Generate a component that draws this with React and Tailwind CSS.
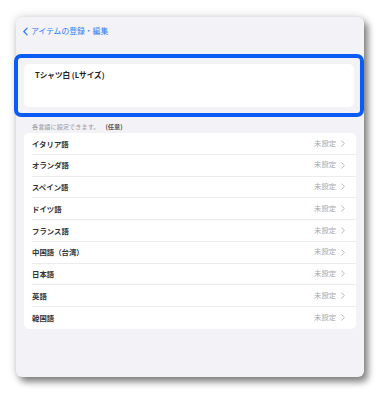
import React from 'react';

const languages = ['イタリア語', 'オランダ語', 'スペイン語', 'ドイツ語', 'フランス語', '中国語（台湾）', '日本語', '英語', '韓国語'];

const Chevron = ({ className }) => (
  <svg viewBox="0 0 6 10" className={className} fill="none" stroke="currentColor" strokeWidth="1.2" strokeLinecap="round" strokeLinejoin="round">
    <path d="M1 1l4 4-4 4" />
  </svg>
);

const App = () => {
  return (
    <div className="w-[389px] h-[403px] bg-white pt-[17px] pl-[16px] leading-none" style={{ fontFamily: '"Noto Sans CJK JP", "Noto Sans", sans-serif' }}>
      <div className="relative w-[348px] h-[360px] bg-[#f2f2f7] rounded-[6px] shadow-[0_0_10px_rgba(0,0,0,0.18),4px_5px_7px_rgba(0,0,0,0.45)]">
        {/* header */}
        <div className="flex items-center gap-[3px] pl-[7px] h-[28px] text-[#2f7df6]">
          <svg viewBox="0 0 6 10" className="w-[5px] h-[9px]" fill="none" stroke="currentColor" strokeWidth="1.5" strokeLinecap="round" strokeLinejoin="round">
            <path d="M5 1L1 5l4 4" />
          </svg>
          <span className="text-[7.8px] leading-none">アイテムの登録・編集</span>
        </div>

        {/* highlighted name field */}
        <div className="ml-[-2px] mt-[9px] w-[350px] h-[63px] border-[4px] border-[#0a5cf5] rounded-[7px] px-[6px] py-[6px]">
          <div className="h-full bg-white rounded-[5px] pl-[11px] pt-[7px]">
            <div className="text-[7.6px] leading-none font-bold text-[#222]">Tシャツ白 (Lサイズ)</div>
          </div>
        </div>

        {/* caption */}
        <div className="pl-[16px] mt-[4px] h-[12px] flex items-center text-[6.2px] leading-none">
          <span className="text-[#9a9aa0]">各言語に設定できます。</span>
          <span className="ml-[6px] text-[#555] font-bold">(任意)</span>
        </div>

        {/* language list */}
        <div className="mx-[8px] bg-white rounded-[5px]">
          {languages.map((lang, i) => (
            <div key={lang} className="pl-[8px] h-[21.75px]">
              <div className={`h-full flex items-center justify-between pr-[11px] ${i < languages.length - 1 ? 'border-b border-[#ececef]' : ''}`}>
                <span className="text-[7.4px] leading-none font-bold text-[#333]">{lang}</span>
                <div className="flex items-center gap-[5px] text-[#a8a8ad]">
                  <span className="text-[7.3px] leading-none">未設定</span>
                  <Chevron className="w-[4px] h-[7px]" />
                </div>
              </div>
            </div>
          ))}
        </div>
      </div>
    </div>
  );
};

export default App;
